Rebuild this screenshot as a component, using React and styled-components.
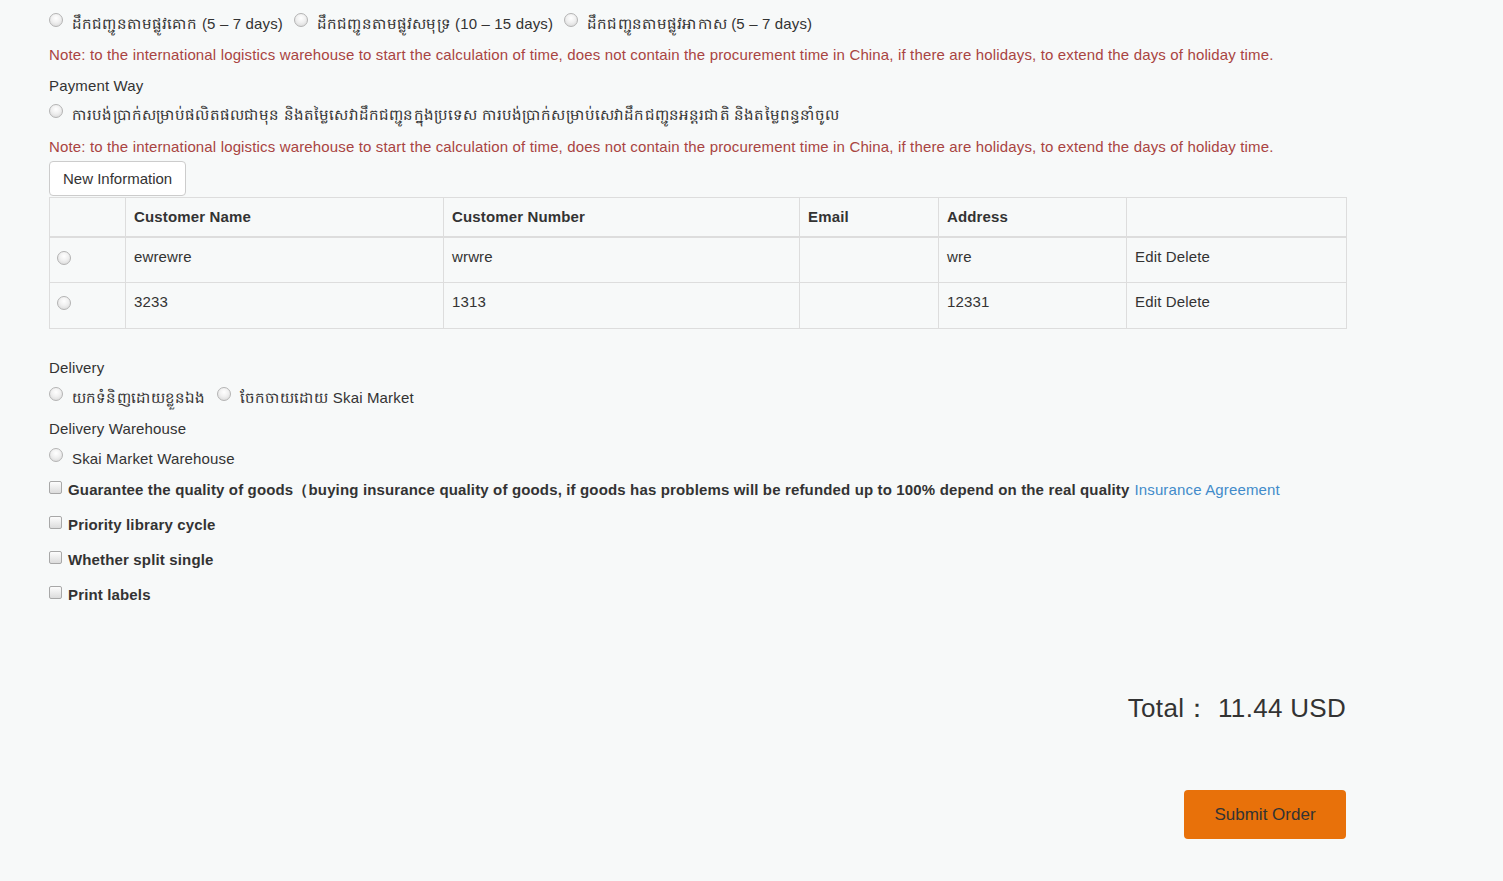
import React from 'react';
import styled, { createGlobalStyle } from 'styled-components';

const GlobalStyle = createGlobalStyle`
  html, body {
    margin: 0;
    padding: 0;
    background: #f7f9f9;
  }
  body {
    font-family: "Liberation Sans", Arial, "Noto Sans", sans-serif;
    font-size: 15px;
    letter-spacing: 0.15px;
    color: #333;
  }
`;

const Page = styled.div`
  width: 1297px;
  padding: 0 0 40px 49px;
  display: flex;
  flex-direction: column;
`;

const Line = styled.div`
  margin-top: ${(p) => p.$mt || 0}px;
  display: flex;
  align-items: flex-start;
  flex-wrap: wrap;
  line-height: 21px;
  min-height: 21px;
`;

const Note = styled.p`
  margin: ${(p) => p.$mt || 0}px 0 0;
  line-height: 21px;
  color: #a94442;
`;

const Label = styled.div`
  margin-top: ${(p) => p.$mt || 0}px;
  line-height: 21px;
`;

const Option = styled.label`
  display: inline-flex;
  align-items: flex-start;
  margin-right: 11px;
  gap: ${(p) => p.$gap ?? 9}px;
`;

const Radio = styled.span`
  display: block;
  flex: none;
  width: 12px;
  height: 12px;
  margin-top: ${(p) => p.$top ?? 1}px;
  margin-left: ${(p) => p.$left ?? 0}px;
  border-radius: 50%;
  border: 1px solid #b4b4b4;
  background: radial-gradient(circle at 50% 35%, #ffffff 0%, #f0f0f0 45%, #d4d4d4 100%);
`;

const Check = styled.span`
  display: block;
  flex: none;
  width: 11px;
  height: 11px;
  margin-top: 2px;
  border-radius: 2px;
  border: 1px solid #a8a8a8;
  background: linear-gradient(#fdfdfd, #dcdcdc);
`;

const Btn = styled.button`
  align-self: flex-start;
  margin-top: 4px;
  height: 35px;
  padding: 0 13px;
  font: inherit;
  color: #333;
  background: #fff;
  border: 1px solid #ccc;
  border-radius: 4px;
`;

const Table = styled.table`
  width: 1297px;
  margin-top: 1px;
  border-collapse: collapse;
  table-layout: fixed;
  font-size: 15px;
`;

const Th = styled.th`
  box-sizing: border-box;
  width: ${(p) => p.$w}px;
  height: 39px;
  padding: 0 8px;
  text-align: left;
  font-weight: bold;
  border: 1px solid #ddd;
  border-bottom: 2px solid #ddd;
  color: #333;
`;

const Td = styled.td`
  box-sizing: border-box;
  height: 46px;
  padding: 8px 8px 0;
  vertical-align: top;
  border: 1px solid #ddd;
  line-height: 21px;
`;

const Bold = styled.span`
  font-weight: bold;
`;

const Link = styled.a`
  color: #428bca;
  text-decoration: none;
  margin-left: 5px;
`;

const Total = styled.div`
  margin-top: 85px;
  align-self: flex-end;
  font-size: 26px;
  line-height: 36px;
  letter-spacing: 0.3px;
  color: #333;
`;

const Submit = styled.button`
  align-self: flex-end;
  margin-top: 64px;
  width: 162px;
  height: 49px;
  font: inherit;
  font-size: 17px;
  color: #333;
  background: #e8710a;
  border: none;
  border-radius: 4px;
`;

const rows = [
  { name: 'ewrewre', num: 'wrwre', email: '', addr: 'wre' },
  { name: '3233', num: '1313', email: '', addr: '12331' },
];

const extras = ['Priority library cycle', 'Whether split single', 'Print labels'];

export default function App() {
  return (
    <>
      <GlobalStyle />
      <Page>
        <Line $mt={13}>
          <Option><Radio $top={0} />ដឹកជញ្ជូនតាមផ្លូវគោក (5 – 7 days)</Option>
          <Option><Radio $top={0} />ដឹកជញ្ជូនតាមផ្លូវសមុទ្រ (10 – 15 days)</Option>
          <Option><Radio $top={0} />ដឹកជញ្ជូនតាមផ្លូវអាកាស (5 – 7 days)</Option>
        </Line>
        <Note $mt={10}>
          Note: to the international logistics warehouse to start the calculation of time, does not contain the procurement time in China, if there are holidays, to extend the days of holiday time.
        </Note>
        <Label $mt={10}>Payment Way</Label>
        <Line $mt={8}>
          <Option><Radio $top={0} />ការបង់ប្រាក់សម្រាប់ផលិតផលជាមុន និងតម្លៃសេវាដឹកជញ្ជូនក្នុងប្រទេស ការបង់ប្រាក់សម្រាប់សេវាដឹកជញ្ជូនអន្តរជាតិ និងតម្លៃពន្ធនាំចូល</Option>
        </Line>
        <Note $mt={11}>
          Note: to the international logistics warehouse to start the calculation of time, does not contain the procurement time in China, if there are holidays, to extend the days of holiday time.
        </Note>
        <Btn>New Information</Btn>
        <Table>
          <thead>
            <tr>
              <Th $w={76} />
              <Th $w={318}>Customer Name</Th>
              <Th $w={356}>Customer Number</Th>
              <Th $w={139}>Email</Th>
              <Th $w={188}>Address</Th>
              <Th $w={220} />
            </tr>
          </thead>
          <tbody>
            {rows.map((r) => (
              <tr key={r.name}>
                <Td><Radio $top={5} $left={-1} /></Td>
                <Td>{r.name}</Td>
                <Td>{r.num}</Td>
                <Td>{r.email}</Td>
                <Td>{r.addr}</Td>
                <Td>Edit Delete</Td>
              </tr>
            ))}
          </tbody>
        </Table>
        <Label $mt={28}>Delivery</Label>
        <Line $mt={9}>
          <Option><Radio $top={0} />យកទំនិញដោយខ្លួនឯង</Option>
          <Option><Radio $top={0} />ចែកចាយដោយ Skai Market</Option>
        </Line>
        <Label $mt={10}>Delivery Warehouse</Label>
        <Line $mt={9}>
          <Option><Radio $top={0} />Skai Market Warehouse</Option>
        </Line>
        <Line $mt={10}>
          <Option $gap={6}>
            <Check />
            <span>
              <Bold>Guarantee the quality of goods（buying insurance quality of goods, if goods has problems will be refunded up to 100% depend on the real quality</Bold>
              <Link href="#">Insurance Agreement</Link>
            </span>
          </Option>
        </Line>
        {extras.map((t) => (
          <Line $mt={14} key={t}>
            <Option $gap={6}><Check /><Bold>{t}</Bold></Option>
          </Line>
        ))}
        <Total>Total：&nbsp;11.44 USD</Total>
        <Submit>Submit Order</Submit>
      </Page>
    </>
  );
}
